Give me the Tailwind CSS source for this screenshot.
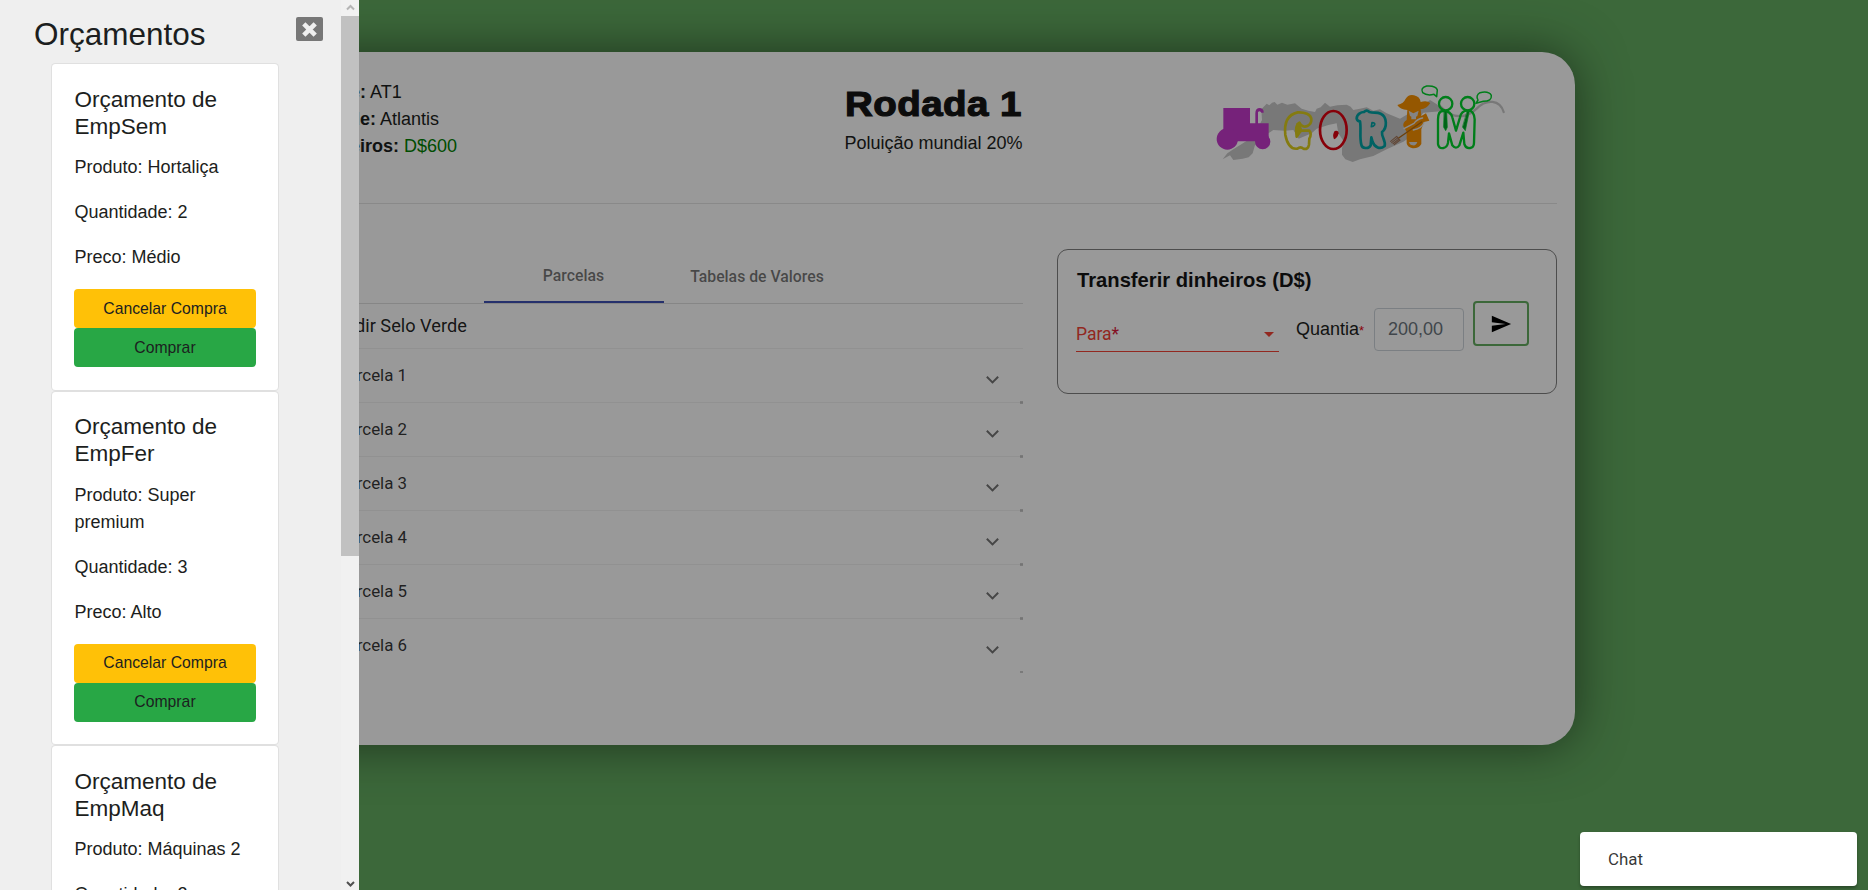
<!DOCTYPE html>
<html lang="pt-BR">
<head>
<meta charset="utf-8">
<title>Orçamentos</title>
<script src="https://cdn.jsdelivr.net/npm/@tailwindcss/browser@4"></script>
</head>
<body class="relative h-[890px] w-[1868px] overflow-hidden bg-[#64ad61] font-['Liberation_Sans',Arial,sans-serif] text-[18px] leading-[27px] text-[#1c1e20]">

<main class="mx-auto mt-[52px] flex h-[693px] w-[1282px] flex-col rounded-[33px] bg-white px-[18px] shadow-[0_0_50px_rgba(0,0,0,0.5)]">
  <header class="flex h-[152px] shrink-0 border-b border-black/10 pt-[27px]">
    <div class="-ml-px w-[416px]">
      <p><b>Nome:</b> AT1</p>
      <p><b>Cidade:</b> Atlantis</p>
      <p><b>Dinheiros:</b> <span class="text-[#008000]">D$600</span></p>
    </div>
    <div class="w-[415px] text-center">
      <h1 class="h-[51px] scale-x-[1.1] text-[35px] leading-[49px] font-bold tracking-[0.4px] text-[#151515] [-webkit-text-stroke:1.2px_#151515]">Rodada 1</h1>
      <p>Poluição mundial 20%</p>
    </div>
    <div class="flex-1">
      <svg class="mt-[-9px] ml-[59px] h-[110px] w-[320px]" viewBox="0 0 960 330" fill="none" stroke-linecap="round" stroke-linejoin="round">
        <path fill="#c8c8c8" d="M68 268L82 250L100 238L160 200L186 150L184 118L200 101L208 106L216 98L224 96L232 104L246 98L262 104L285 100L305 116L325 122L345 126L350 116L362 112L375 98L390 110L412 106L440 104L452 110L460 120L480 116L500 112L520 122L540 118L560 130L600 146L630 128L660 112L690 90L738 120L722 124L670 128L640 165L640 195L610 215L560 238L520 258L480 268L458 276L436 268L426 254L426 235L432 215L415 190L410 160L385 165L350 176L335 190L310 200L296 206L280 180L255 182L220 180L205 190L165 225L158 250L146 262L128 266L100 270L90 256Z"/>
        <path stroke="#c8c8c8" stroke-width="7" d="M720 108C760 150 800 145 830 116C860 85 900 90 911 126"/>
        <g fill="#c53acb">
          <path d="M70 114H150V160H166V130Q166 114 180 114Q192 116 191 128H184Q180 120 174 126V160H206V214H70Z"/>
          <circle cx="82" cy="207" r="32"/><circle cx="188" cy="215" r="23"/>
        </g>
        <path stroke="#dccd1c" stroke-width="8" d="M334 150C334 132 312 126 293 127C262 134 252 160 256 195C262 225 276 238 292 236Q302 228 310 236Q324 240 327 224L328 206Q336 192 328 182L304 182C298 186 294 195 290 200C287 180 289 162 298 158C304 170 314 172 322 168Q334 162 334 150Z"/>
        <path fill="#dccd1c" d="M290 160L300 158L306 178L298 190L288 202Z"/>
        <ellipse cx="400" cy="180" rx="40" ry="57" stroke="#e00010" stroke-width="8"/>
        <path fill="#e00010" d="M404 183Q416 180 416 190Q412 205 402 208Q396 194 404 183Z"/>
        <path stroke="#00a3a6" stroke-width="8" d="M470 146C470 132 484 126 492 126Q500 118 508 126C520 130 530 126 542 131C562 140 562 174 546 186C544 200 558 212 554 228C540 240 524 232 518 216L514 202L512 226C506 238 486 236 484 224C478 200 484 176 480 154Q472 154 470 146Z"/>
        <path stroke="#00a3a6" stroke-width="5" d="M516 158Q526 158 524 164Q520 170 514 170Z"/>
        <path fill="#f89200" d="M592 105Q612 100 616 88Q625 72 642 76Q660 80 662 96Q680 90 691 99Q680 116 662 118L664 138L678 130L688 152L672 156L664 178V222Q656 236 638 235Q622 232 620 220V186L610 168Q608 158 620 150L622 120Q600 118 592 105Z"/>
        <path fill="#dcdcdc" d="M626 122L640 130L656 122L652 138L648 140V148H634V140L630 138ZM627 216H652Q648 228 638 226Q630 226 627 216Z"/>
        <path stroke="#e8e8e8" stroke-width="4" d="M612 176L642 160Q650 148 668 144M640 180Q666 174 672 158"/>
        <path stroke="#b36b10" stroke-width="4" d="M596 204L665 156"/>
        <path stroke="#a2765a" stroke-width="3.5" d="M572 214L590 199M575 218L594 203M579 221L597 207M583 224L600 210M590 199L600 211"/>
        <g stroke="#00d22c" stroke-width="7">
          <circle cx="737" cy="101" r="20"/><circle cx="803" cy="101" r="20"/>
          <path d="M728 123Q714 124 714 148V222Q716 236 730 234Q742 232 744 218L747 190L757 226Q768 240 778 226L790 188L793 222Q798 236 810 234Q822 232 822 218L824 148Q822 122 806 122Q784 120 780 142L768 182L757 142Q752 122 728 123Z"/>
          <path fill="#00a529" stroke-width="2" d="M733 124H740L742 172L737 182L731 172ZM802 124H808L796 182L788 172Z"/>
          <path stroke-width="4.5" d="M710 80L702 73Q680 78 668 68Q660 54 680 48Q708 46 712 60L710 80ZM828 100L834 90Q826 76 840 68Q866 62 874 76Q876 94 850 94Z"/>
        </g>
      </svg>
    </div>
  </header>

  <div class="flex pt-[45px]">
    <section class="w-[712px] font-[Roboto,sans-serif]">
      <div class="flex h-[55px] border-b border-black/12 text-[15.8px] font-medium text-black/54">
        <div class="w-[173px]"></div>
        <div class="flex w-[180px] items-center justify-center border-b-2 border-[#3f51b5] pr-[1px]">Parcelas</div>
        <div class="flex w-[186px] items-center justify-center">Tabelas de Valores</div>
      </div>
      <div class="flex h-[44px] items-center pb-[2px] pl-[23px] text-[18.2px] text-black/87">Pedir Selo Verde</div>
      <div class="text-[16.9px] text-black/80">
        <div class="relative flex h-[54px] items-center justify-between border-t border-black/5 pr-[26px] pl-[26px] after:absolute after:right-0 after:-bottom-[2px] after:h-[3px] after:w-[3px] after:bg-black/20"><span class="pb-[1px]">Parcela 1</span><i class="mt-[4px] h-[9px] w-[9px] rotate-45 border-r-2 border-b-2 border-black/54"></i></div>
        <div class="relative flex h-[54px] items-center justify-between border-t border-black/5 pr-[26px] pl-[26px] after:absolute after:right-0 after:-bottom-[2px] after:h-[3px] after:w-[3px] after:bg-black/20"><span class="pb-[1px]">Parcela 2</span><i class="mt-[4px] h-[9px] w-[9px] rotate-45 border-r-2 border-b-2 border-black/54"></i></div>
        <div class="relative flex h-[54px] items-center justify-between border-t border-black/5 pr-[26px] pl-[26px] after:absolute after:right-0 after:-bottom-[2px] after:h-[3px] after:w-[3px] after:bg-black/20"><span class="pb-[1px]">Parcela 3</span><i class="mt-[4px] h-[9px] w-[9px] rotate-45 border-r-2 border-b-2 border-black/54"></i></div>
        <div class="relative flex h-[54px] items-center justify-between border-t border-black/5 pr-[26px] pl-[26px] after:absolute after:right-0 after:-bottom-[2px] after:h-[3px] after:w-[3px] after:bg-black/20"><span class="pb-[1px]">Parcela 4</span><i class="mt-[4px] h-[9px] w-[9px] rotate-45 border-r-2 border-b-2 border-black/54"></i></div>
        <div class="relative flex h-[54px] items-center justify-between border-t border-black/5 pr-[26px] pl-[26px] after:absolute after:right-0 after:-bottom-[2px] after:h-[3px] after:w-[3px] after:bg-black/20"><span class="pb-[1px]">Parcela 5</span><i class="mt-[4px] h-[9px] w-[9px] rotate-45 border-r-2 border-b-2 border-black/54"></i></div>
        <div class="relative flex h-[54px] items-center justify-between border-t border-black/5 pr-[26px] pl-[26px] after:absolute after:right-0 after:-bottom-[1px] after:h-[2px] after:w-[3px] after:bg-black/20"><span class="pb-[1px]">Parcela 6</span><i class="mt-[4px] h-[9px] w-[9px] rotate-45 border-r-2 border-b-2 border-black/54"></i></div>
      </div>
    </section>

    <section class="ml-[34px] h-[145px] w-[500px] rounded-[11px] border border-[#808080] pt-[17px] pl-[18px]">
      <h2 class="ml-[1px] text-[20.2px] font-bold text-[#151515]">Transferir dinheiros (D$)</h2>
      <div class="mt-[7px] flex items-start">
        <div class="mt-[14px] flex h-[37px] w-[203px] justify-between border-b border-[#f44336] pr-[5px] text-[#f44336]">
          <span class="mt-[6px] font-[Roboto,sans-serif] text-[17.5px]">Para<span class="text-[#dc1b3c]">*</span></span>
          <i class="mt-[17px] h-0 w-0 border-x-[5px] border-t-[5px] border-x-transparent border-t-[#f44336]"></i>
        </div>
        <div class="mt-[15px] ml-[17px] w-[78px]">Quantia<span class="text-[13px] text-red-600">*</span></div>
        <div class="mt-[7px] h-[43px] w-[90px] rounded-[4px] border border-[#ced4da] pt-[7px] pl-[13px] text-[#6c757d]">200,00</div>
        <div class="mt-0 ml-[9px] flex h-[45px] w-[56px] items-center justify-center rounded-[4px] border-2 border-[#64ad61]">
          <svg class="h-[22px] w-[22px]" viewBox="0 0 24 24" fill="#000"><path d="M2.01 21L23 12 2.01 3 2 10l15 2-15 2z"/></svg>
        </div>
      </div>
    </section>
  </div>
</main>

<div class="absolute inset-0 bg-black/40"></div>

<aside class="absolute top-0 left-0 flex h-[890px] w-[359px] overflow-hidden bg-[#efefef]">
  <div class="w-[341px] shrink-0">
    <div class="flex h-[63px] justify-between pt-[15px] pr-[18px] pl-[34px]">
      <h3 class="text-[31.5px] leading-[38px]">Orçamentos</h3>
      <div class="mt-[2px] flex h-[24px] w-[27px] items-center justify-center rounded-[2px] bg-[#777]">
        <svg class="h-[15px] w-[15px]" viewBox="0 0 15 15" stroke="#efefef" stroke-width="4.6"><path d="M1.8 1.8L13.2 13.2M13.2 1.8L1.8 13.2"/></svg>
      </div>
    </div>
    <div class="ml-[51px] w-[228px]">
      <div class="h-[327.5px] rounded-[4.5px] border border-black/12 bg-white px-[22px] pt-[21.5px]">
        <h5 class="mb-[14.5px] pl-[0.5px] text-[22.5px]">Orçamento de<br>EmpSem</h5>
        <p class="mb-[18px] pl-[0.5px]">Produto: Hortaliça</p>
        <p class="mb-[18px] pl-[0.5px]">Quantidade: 2</p>
        <p class="mb-[18px] pl-[0.5px]">Preco: Médio</p>
        <div class="h-[39px] rounded-[4px] bg-[#ffc107] pt-[6px] text-center text-[15.75px]">Cancelar Compra</div>
        <div class="h-[39px] rounded-[4px] bg-[#28a745] pt-[6px] text-center text-[15.75px]">Comprar</div>
      </div>
      <div class="h-[354.5px] rounded-[4.5px] border border-black/12 bg-white px-[22px] pt-[21.5px]">
        <h5 class="mb-[14.5px] pl-[0.5px] text-[22.5px]">Orçamento de<br>EmpFer</h5>
        <p class="mb-[18px] pl-[0.5px]">Produto: Super<br>premium</p>
        <p class="mb-[18px] pl-[0.5px]">Quantidade: 3</p>
        <p class="mb-[18px] pl-[0.5px]">Preco: Alto</p>
        <div class="h-[39px] rounded-[4px] bg-[#ffc107] pt-[5px] text-center text-[15.75px]">Cancelar Compra</div>
        <div class="h-[39px] rounded-[4px] bg-[#28a745] pt-[5px] text-center text-[15.75px]">Comprar</div>
      </div>
      <div class="h-[327.5px] rounded-[4.5px] border border-black/12 bg-white px-[22px] pt-[21.5px]">
        <h5 class="mb-[14.5px] pl-[0.5px] text-[22.5px]">Orçamento de<br>EmpMaq</h5>
        <p class="mb-[18px] pl-[0.5px]">Produto: Máquinas 2</p>
        <p class="mb-[18px] pl-[0.5px]">Quantidade: 2</p>
      </div>
    </div>
  </div>
  <div class="flex h-[890px] w-[18px] flex-col items-center bg-[#f1f1f1]">
    <svg class="h-[16px] w-[18px] shrink-0" viewBox="0 0 18 16" fill="none" stroke="#b5b5b5" stroke-width="2"><path d="M6 9.5L9.5 6L13 9.5"/></svg>
    <div class="h-[540px] w-full shrink-0 bg-[#c1c1c1]"></div>
    <svg class="mt-auto h-[16px] w-[18px] shrink-0" viewBox="0 0 18 16" fill="none" stroke="#505050" stroke-width="2"><path d="M6 8L9.5 11.5L13 8"/></svg>
  </div>
</aside>

<div class="absolute top-[832px] left-[1580px] flex h-[54px] w-[277px] items-center rounded-[4px] bg-white pl-[28px] font-[Roboto,sans-serif] text-[16.9px] text-black/80 shadow-[0_2px_3px_rgba(0,0,0,0.3)]">Chat</div>
</body>
</html>
